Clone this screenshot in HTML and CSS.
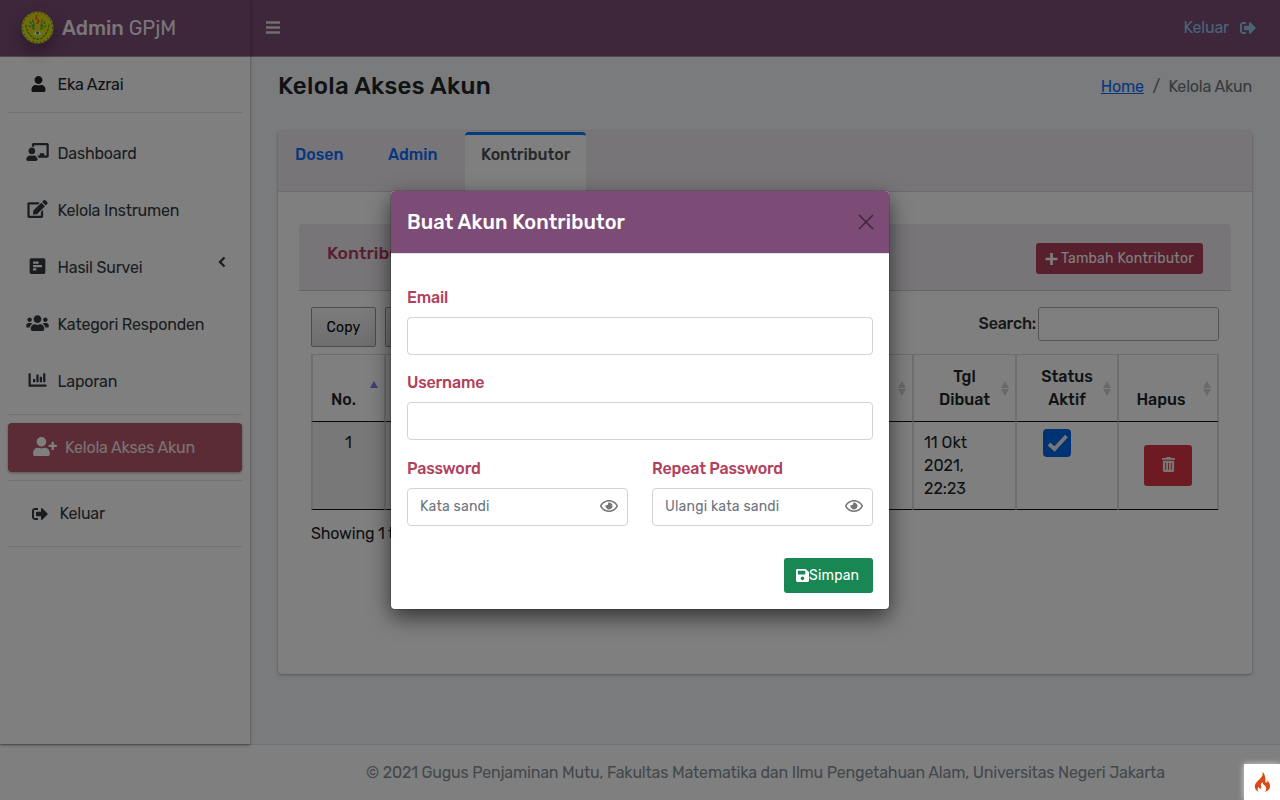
FILE: index.html
```html
<!DOCTYPE html>
<html lang="id">
<head>
<meta charset="utf-8">
<title>Kelola Akses Akun</title>
<link rel="stylesheet" href="styles.css">
</head>
<body>
<div class="app">
  <aside class="sidebar">
    <div class="brand">
      <svg class="logo" viewBox="0 0 34 34"><circle cx="17" cy="17" r="16.500" fill="#e6d80c"/><circle cx="17" cy="17" r="15.500" fill="none" stroke="#2c9a4c" stroke-width="1.200" stroke-dasharray="1.500 2.500"/><path d="M5 14q1 9 7 13M29 14q-1 9-7 13M9 11l5 7M25 11l-5 7M8 15l6 4M26 15l-6 4M12 9l2 8M22 9l-2 8M12 28q5 2 10 0" fill="none" stroke="#16a05a" stroke-width="1.100" stroke-dasharray="3 1"/><path d="M17 4q-3 3 0 5 3 2-1 4" fill="none" stroke="#e8442e" stroke-width="1.300"/><path d="M12.500 24.500l3-4h3l3 4z" fill="#fff"/><circle cx="17" cy="22.500" r="1.600" fill="#16a05a"/></svg>
      <span class="brand-name"><b>Admin</b> GPjM</span>
    </div>
    <nav class="menu">
      <a class="item user"><svg class="icon" width="14" height="16" viewBox="0 0 448 512"><path d="M224 256c70.700 0 128-57.300 128-128S294.700 0 224 0 96 57.300 96 128s57.300 128 128 128zm89.600 32h-16.700c-22.200 10.200-46.900 16-72.900 16s-50.600-5.800-72.900-16h-16.700C60.200 288 0 348.200 0 422.400V464c0 26.500 21.500 48 48 48h352c26.500 0 48-21.500 48-48v-41.600c0-74.200-60.200-134.400-134.400-134.400z"/></svg><span>Eka Azrai</span></a>
      <a class="item"><svg class="icon" width="23" height="18" viewBox="0 0 640 512"><path d="M208 352c-2.390 0-4.780.350-7.060 1.090C187.980 357.300 174.350 360 160 360c-14.350 0-27.980-2.700-40.950-6.910-2.280-.740-4.660-1.090-7.050-1.090C49.940 352-.330 402.480 0 464.620.140 490.880 21.730 512 48 512h224c26.270 0 47.860-21.120 48-47.380.330-62.140-49.940-112.620-112-112.620zm-48-32c53.020 0 96-42.980 96-96s-42.980-96-96-96-96 42.980-96 96 42.980 96 96 96zM592 0H208c-26.470 0-48 22.250-48 49.590V96c23.420 0 45.100 6.780 64 17.800V64h352v288h-64v-64H384v64h-76.240c19.100 16.690 33.120 38.730 39.690 64H592c26.470 0 48-22.250 48-49.590V49.590C640 22.250 618.470 0 592 0z"/></svg><span>Dashboard</span></a>
      <a class="item"><svg class="icon" width="21" height="18" viewBox="0 0 576 512"><path d="M402.600 83.200l90.200 90.200c3.800 3.800 3.800 10 0 13.800L274.400 405.600l-92.800 10.300c-12.400 1.400-22.900-9.100-21.500-21.500l10.300-92.800L388.800 83.200c3.800-3.800 10-3.800 13.800 0zm162-22.900l-48.800-48.800c-15.200-15.200-39.900-15.200-55.200 0l-35.400 35.400c-3.800 3.800-3.800 10 0 13.800l90.200 90.200c3.800 3.800 10 3.800 13.800 0l35.400-35.400c15.200-15.300 15.200-40 0-55.200zM384 346.200V448H64V128h229.800c3.200 0 6.200-1.300 8.500-3.500l40-40c7.600-7.600 2.200-20.500-8.500-20.500H48C21.500 64 0 85.500 0 112v352c0 26.500 21.500 48 48 48h352c26.500 0 48-21.500 48-48V306.200c0-10.700-12.900-16-20.500-8.500l-40 40c-2.200 2.300-3.500 5.300-3.500 8.500z"/></svg><span>Kelola Instrumen</span></a>
      <a class="item"><svg class="icon" width="16" height="18" viewBox="0 0 448 512"><path fill-rule="evenodd" d="M48 32h352a48 48 0 0 1 48 48v352a48 48 0 0 1-48 48H48a48 48 0 0 1-48-48V80a48 48 0 0 1 48-48zM112 128a16 16 0 0 0-16 16v32a16 16 0 0 0 16 16h128a16 16 0 0 0 16-16v-32a16 16 0 0 0-16-16zm0 96a16 16 0 0 0-16 16v32a16 16 0 0 0 16 16h224a16 16 0 0 0 16-16v-32a16 16 0 0 0-16-16zm0 96a16 16 0 0 0-16 16v32a16 16 0 0 0 16 16h64a16 16 0 0 0 16-16v-32a16 16 0 0 0-16-16z"/></svg><span>Hasil Survei</span><svg class="caret" width="8" height="12" viewBox="0 0 8 12"><path d="M6.500 1.500L2 6l4.500 4.500" fill="none" stroke="currentColor" stroke-width="2.300"/></svg></a>
      <a class="item"><svg class="icon" width="23" height="18" viewBox="0 0 640 512"><path d="M96 224c35.300 0 64-28.700 64-64s-28.700-64-64-64-64 28.700-64 64 28.700 64 64 64zm448 0c35.300 0 64-28.700 64-64s-28.700-64-64-64-64 28.700-64 64 28.700 64 64 64zm32 32h-64c-17.600 0-33.500 7.100-45.100 18.600 40.300 22.100 68.900 62 75.100 109.400h66c17.700 0 32-14.300 32-32v-32c0-35.300-28.700-64-64-64zm-256 0c61.900 0 112-50.100 112-112S381.900 32 320 32 208 82.100 208 144s50.100 112 112 112zm76.800 32h-8.300c-20.800 10-43.900 16-68.500 16s-47.600-6-68.500-16h-8.300C179.600 288 128 339.600 128 403.200V432c0 26.500 21.500 48 48 48h288c26.500 0 48-21.500 48-48v-28.800c0-63.600-51.600-115.200-115.200-115.200zm-223.700-13.400C161.500 263.100 145.600 256 128 256H64c-35.300 0-64 28.700-64 64v32c0 17.700 14.300 32 32 32h65.900c6.300-47.400 34.900-87.300 75.200-109.400z"/></svg><span>Kategori Responden</span></a>
      <a class="item"><svg class="icon" width="18" height="18" viewBox="0 0 512 512"><path d="M496 384H64V80c0-8.840-7.160-16-16-16H16C7.160 64 0 71.160 0 80v336c0 17.670 14.330 32 32 32h464c8.840 0 16-7.160 16-16v-32c0-8.840-7.160-16-16-16z"/><rect x="128" y="224" width="64" height="96" rx="13"/><rect x="224" y="96" width="64" height="224" rx="13"/><rect x="320" y="160" width="64" height="160" rx="13"/><rect x="416" y="64" width="64" height="256" rx="13"/></svg><span>Laporan</span></a>
      <a class="item active"><svg class="icon" width="24" height="19" viewBox="0 0 640 512"><path d="M624 208h-64v-64c0-8.800-7.200-16-16-16h-32c-8.800 0-16 7.200-16 16v64h-64c-8.800 0-16 7.200-16 16v32c0 8.800 7.200 16 16 16h64v64c0 8.800 7.200 16 16 16h32c8.800 0 16-7.200 16-16v-64h64c8.800 0 16-7.200 16-16v-32c0-8.800-7.200-16-16-16zM224 256c70.700 0 128-57.300 128-128S294.700 0 224 0 96 57.300 96 128s57.300 128 128 128zm89.600 32h-16.700c-22.200 10.200-46.900 16-72.900 16s-50.600-5.800-72.900-16h-16.700C60.200 288 0 348.200 0 422.400V464c0 26.500 21.500 48 48 48h352c26.500 0 48-21.500 48-48v-41.600c0-74.200-60.200-134.400-134.400-134.400z"/></svg><span>Kelola Akses Akun</span></a>
      <a class="item exit"><svg class="icon" width="16" height="16" viewBox="0 0 512 512"><path d="M497 273L329 441c-15 15-41 4.500-41-17v-96H152c-13.300 0-24-10.700-24-24v-96c0-13.300 10.700-24 24-24h136V88c0-21.400 25.900-32 41-17l168 168c9.300 9.400 9.300 24.600 0 34zM192 436v-40c0-6.600-5.400-12-12-12H96c-17.700 0-32-14.300-32-32V160c0-17.700 14.300-32 32-32h84c6.600 0 12-5.400 12-12V76c0-6.600-5.400-12-12-12H96c-53 0-96 43-96 96v192c0 53 43 96 96 96h84c6.600 0 12-5.400 12-12z"/></svg><span>Keluar</span></a>
    </nav>
  </aside>
  <header class="topbar">
    <svg width="14" height="16" viewBox="0 0 14 16" fill="#ddd"><path d="M0 1.200h14v2.600H0zM0 6.200h14v2.600H0zM0 11.200h14v2.600H0z"/></svg>
    <a class="logout"><span>Keluar</span><svg width="16" height="16" viewBox="0 0 512 512"><path d="M497 273L329 441c-15 15-41 4.500-41-17v-96H152c-13.300 0-24-10.700-24-24v-96c0-13.300 10.700-24 24-24h136V88c0-21.400 25.900-32 41-17l168 168c9.300 9.400 9.300 24.600 0 34zM192 436v-40c0-6.600-5.400-12-12-12H96c-17.700 0-32-14.300-32-32V160c0-17.700 14.300-32 32-32h84c6.600 0 12-5.400 12-12V76c0-6.600-5.400-12-12-12H96c-53 0-96 43-96 96v192c0 53 43 96 96 96h84c6.600 0 12-5.400 12-12z"/></svg></a>
  </header>
  <main class="content">
    <div class="page-head">
      <h1>Kelola Akses Akun</h1>
      <div class="crumbs"><a>Home</a><span class="slash">/</span><span>Kelola Akun</span></div>
    </div>
    <section class="card">
      <div class="tabs">
        <a class="tab">Dosen</a><a class="tab second">Admin</a><a class="tab current">Kontributor</a>
      </div>
      <div class="panel">
        <div class="panel-head">
          <h2>Kontributor</h2>
          <button class="add"><svg width="13" height="14" viewBox="0 0 13 14"><path d="M6.500 1v12M.5 7h12" stroke="#fff" stroke-width="2.600"/></svg><span>Tambah Kontributor</span></button>
        </div>
        <div class="tools">
          <div class="exports"><button class="export">Copy</button><button class="export"></button></div>
          <label class="search"><span>Search:</span><input type="text"></label>
        </div>
        <table class="grid">
          <colgroup><col class="c-no"><col class="c-info"><col class="c-date"><col class="c-status"><col class="c-del"></colgroup>
          <thead><tr>
            <th>No.<i class="sort asc"></i></th>
            <th><i class="sort"></i></th>
            <th>Tgl<br>Dibuat<i class="sort"></i></th>
            <th>Status<br>Aktif<i class="sort"></i></th>
            <th>Hapus<i class="sort"></i></th>
          </tr></thead>
          <tbody><tr>
            <td class="num">1</td><td></td>
            <td>11 Okt<br>2021,<br>22:23</td>
            <td class="state"><span class="check"><svg width="28" height="28" viewBox="0 0 28 28"><path d="M6 15l5.500 5L23.500 7" fill="none" stroke="#fff" stroke-width="3.800"/></svg></span></td>
            <td class="del"><button class="trash"><svg width="13" height="15" viewBox="0 0 448 512"><path fill="#fff" d="M32 464a48 48 0 0 0 48 48h288a48 48 0 0 0 48-48V128H32zm272-256a16 16 0 0 1 32 0v224a16 16 0 0 1-32 0zm-96 0a16 16 0 0 1 32 0v224a16 16 0 0 1-32 0zm-96 0a16 16 0 0 1 32 0v224a16 16 0 0 1-32 0zM432 32H312l-9.400-18.700A24 24 0 0 0 281.100 0H166.800a23.720 23.720 0 0 0-21.400 13.300L136 32H16A16 16 0 0 0 0 48v32a16 16 0 0 0 16 16h416a16 16 0 0 0 16-16V48a16 16 0 0 0-16-16z"/></svg></button></td>
          </tr></tbody>
        </table>
        <p class="info">Showing 1 to 1 of 1 entries</p>
      </div>
    </section>
  </main>
  <footer class="footer">© 2021 Gugus Penjaminan Mutu, Fakultas Matematika dan Ilmu Pengetahuan Alam, Universitas Negeri Jakarta</footer>
</div>
<div class="backdrop">
  <div class="modal">
    <div class="modal-head"><h3>Buat Akun Kontributor</h3><svg width="16" height="16" viewBox="0 0 16 16"><path d="M1 1l14 14M15 1L1 15" stroke="#3e263b" stroke-width="1.500"/></svg></div>
    <form class="modal-body">
      <div class="field"><label>Email</label><div class="input"></div></div>
      <div class="field"><label>Username</label><div class="input"></div></div>
      <div class="pair">
        <div class="field"><label>Password</label><div class="input"><span>Kata sandi</span><svg width="18" height="16" viewBox="0 0 576 512"><path d="M288 144a110.940 110.940 0 0 0-31.240 5 55.400 55.400 0 0 1 7.240 27 56 56 0 0 1-56 56 55.400 55.400 0 0 1-27-7.240A111.710 111.710 0 1 0 288 144zm284.520 97.400C518.290 135.590 410.930 64 288 64S57.680 135.640 3.480 241.410a32.350 32.350 0 0 0 0 29.190C57.710 376.410 165.070 448 288 448s230.320-71.640 284.520-177.410a32.350 32.350 0 0 0 0-29.190zM288 400c-98.650 0-189.090-55-237.930-144C98.910 167 189.340 112 288 112s189.090 55 237.930 144C477.100 345 386.660 400 288 400z"/></svg></div></div>
        <div class="field"><label>Repeat Password</label><div class="input"><span>Ulangi kata sandi</span><svg width="18" height="16" viewBox="0 0 576 512"><path d="M288 144a110.940 110.940 0 0 0-31.240 5 55.400 55.400 0 0 1 7.240 27 56 56 0 0 1-56 56 55.400 55.400 0 0 1-27-7.240A111.710 111.710 0 1 0 288 144zm284.520 97.400C518.290 135.590 410.930 64 288 64S57.680 135.640 3.480 241.410a32.350 32.350 0 0 0 0 29.190C57.710 376.410 165.070 448 288 448s230.320-71.640 284.520-177.410a32.350 32.350 0 0 0 0-29.190zM288 400c-98.650 0-189.090-55-237.930-144C98.910 167 189.340 112 288 112s189.090 55 237.930 144C477.100 345 386.660 400 288 400z"/></svg></div></div>
      </div>
      <button type="button" class="save"><svg width="13" height="15" viewBox="0 0 448 512"><path fill="#fff" d="M433.941 129.941l-83.882-83.882A48 48 0 0 0 316.118 32H48C21.490 32 0 53.490 0 80v352c0 26.510 21.490 48 48 48h352c26.510 0 48-21.490 48-48V163.882a48 48 0 0 0-14.059-33.941zM224 416c-35.346 0-64-28.654-64-64 0-35.346 28.654-64 64-64s64 28.654 64 64c0 35.346-28.654 64-64 64zm96-304.520V212c0 6.627-5.373 12-12 12H76c-6.627 0-12-5.373-12-12V108c0-6.627 5.373-12 12-12h228.520c3.183 0 6.235 1.264 8.485 3.515l3.480 3.480A11.996 11.996 0 0 1 320 111.480z"/></svg><span>Simpan</span></button>
    </form>
  </div>
</div>
<div class="debug"><svg width="17" height="20" viewBox="0 0 17 20"><path fill="#dd4814" d="M8.500 0c.8 3-.5 4.500-2.300 6.500C4 9 .8 11 .8 14.500c0 2.600 1.600 4.500 4 5.200-1.500-1.500-1.600-3.600 0-5 .2 1.500.9 2 1.700 2 1.400-.2.400-2.400.3-3.500C6.800 11.500 8 11 8.800 10.300c-.3 2.700 3.400 3 3.400 6.200 0 1.500-.7 2.600-1.600 3.300 3-.6 5.400-2.600 5.400-5.600 0-2.500-1.200-4.500-2.500-6 .2 1.500-.3 2.300-1 2.300-1.800 0-.8-2.300-1.200-4.500C10.900 3.500 10.300 1.200 8.500 0z"/></svg></div>
</body>
</html>
```
FILE: styles.css
```css
* { box-sizing: border-box; }
body { margin: 0; font: 16px/1.5 Rubik, Roboto, sans-serif; letter-spacing: -.19px; color: #212529; height: 800px; overflow: hidden; }
h1, h2, h3, p { margin: 0; font-weight: 500; }
svg { flex: none; display: block; }
button { font: inherit; }
.app { display: grid; grid-template: 57px 687px 56px / 250px 1fr; height: 800px; background: #f4f6f9; }
.sidebar { grid-row: 1 / 3; background: #fff; box-shadow: 0 1px 3px rgba(0,0,0,.45); z-index: 1; }
.brand { height: 57px; background: #7c4c76; display: flex; align-items: center; padding: 0 0 2px 21px; gap: 7px; color: #fff; font-size: 20px; letter-spacing: 0; border-bottom: 1px solid #a08aa0; }
.logo { width: 33px; height: 33px; border-radius: 50%; box-shadow: 0 8px 16px rgba(0,0,0,.3); }
.brand-name { margin-left: 1px; opacity: .9; white-space: nowrap; padding-top: 2px; }
.brand-name b { font-weight: 500; }
.menu { padding: 0 8px; }
.item { display: flex; align-items: center; height: 57px; color: #343a40; white-space: nowrap; }
.icon { margin: 0 0 3px; fill: currentColor; }
.item > .icon { width: 23px; margin-left: 18px; margin-right: 8.500px; }
.user { height: 56px; border-bottom: 1px solid #dee2e6; margin-bottom: 12px; color: #212529; }
.user > .icon { margin-left: 19px; margin-right: 7.500px; margin-bottom: 1px; }
.caret { margin: -11px 16px 0 auto; }
.item.active { position: relative; height: 49px; background: #b6586a; color: #fff; border-radius: 4px; margin: 13px 0 8px; box-shadow: 0 1px 3px rgba(0,0,0,.35); }
.active > .icon { width: 24px; margin-left: 25px; margin-right: 8px; }
.active > span { opacity: .85; }
.active::before { content: ""; position: absolute; left: 0; right: 0; top: -9px; border-top: 1px solid #dee2e6; }
.exit { height: 67px; border: solid #dee2e6; border-width: 1px 0; }
.exit > .icon { width: 16px; margin-left: 24px; margin-right: 11.500px; margin-bottom: 0; }
.topbar { background: #7c4c76; border-bottom: 1px solid #a08aa0; display: flex; justify-content: space-between; align-items: center; padding: 0 24px 1px 16px; }
.logout { display: flex; gap: 11px; align-items: center; color: #92cbe8; fill: currentColor; }
.content { padding: 14px 28px 0; }
.page-head { display: flex; justify-content: space-between; height: 60px; align-items: flex-start; }
h1 { font-size: 24px; line-height: 30px; letter-spacing: .33px; }
.crumbs { display: flex; line-height: 30px; padding-top: 1px; color: #6c757d; }
.crumbs a { color: #0d6efd; text-decoration: underline; }
.slash { margin: 0 8.500px; }
.card { height: 543px; background: #fff; border-radius: 4px; box-shadow: 0 0 1px rgba(0,0,0,.12), 0 1px 3px rgba(0,0,0,.3); }
.tabs { height: 61px; background: #f1ebf2; border-bottom: 1px solid #dcd6e0; border-radius: 4px 4px 0 0; display: flex; padding-top: 1px; font-weight: 500; letter-spacing: 0; color: #0d6efd; }
.tab { padding: 11px 17px; width: 93px; height: 59px; }
.current { margin-left: 1px; width: 121px; background: #fff; color: #495057; border-top: 3px solid #007bff; padding: 8px 0 0 16px; border-radius: 4px 4px 0 0; height: 60px; }
.panel { padding: 32px 21px 0; }
.panel-head { height: 67px; background: #f1ebf2; border-bottom: 1px solid #cfcbd1; border-radius: 4px 4px 0 0; display: flex; justify-content: space-between; align-items: flex-start; padding: 19px 28px; }
h2 { font-size: 17.600px; line-height: 21px; letter-spacing: 0; color: #b0405b; }
.add { background: #b03e5a; color: #fff; border: 0; border-radius: 3px; width: 167px; height: 31px; padding: 0 9px; display: flex; gap: 3px; align-items: center; font-size: 14px; letter-spacing: .2px; white-space: nowrap; }
.tools { display: flex; justify-content: space-between; padding: 16px 12px 7px; height: 63px; align-items: flex-start; }
.exports { display: flex; gap: 9px; }
.export { width: 65px; height: 40px; border: 1px solid #999; border-radius: 2px; background: linear-gradient(#f8f8f8, #dcdcdc); font-size: 14px; letter-spacing: .2px; padding: 0; color: #000; }
.search { display: flex; align-items: center; gap: 2px; font-weight: 500; color: #333; }
.search input { width: 181px; height: 34px; border: 1px solid #aaa; border-radius: 3px; background: transparent; }
.grid { width: 908px; margin-left: 12px; table-layout: fixed; border-spacing: 0; line-height: 23px; letter-spacing: 0; }
.c-no { width: 74px; } .c-info { width: 528px; } .c-date { width: 103px; } .c-status { width: 102px; } .c-del { width: 101px; }
.grid th, .grid td { border: 0 solid #ddd; border-width: 0 1px; }
.grid th { position: relative; height: 68px; padding: 10px; vertical-align: bottom; border-top-width: 1px; border-bottom: 1px solid #111; font-weight: 500; color: #212529; }
.grid td { height: 88px; padding: 9px 10px; vertical-align: top; border-bottom: 1px solid #111; }
.grid th:first-child { padding-right: 20px; }
.grid th:last-child { padding-right: 24px; }
.grid tr > :first-child { border-left-width: 2px; }
.grid tr > :last-child { border-right-width: 2px; }
.grid td.num { text-align: center; background: #f0f0f0; }
.sort::before, .sort::after { content: ""; position: absolute; right: 6px; border: solid transparent; border-width: 0 4px; }
.sort::before { top: 26px; border-bottom: 7px solid #d2d2d2; }
.sort::after { top: 34px; border-top: 7px solid #d2d2d2; }
.sort.asc::before { border-bottom-color: #7f7fe0; }
.sort.asc::after { display: none; }
.grid td.state { padding: 7px 0 0 26px; }
.check { display: block; width: 28px; height: 28px; border-radius: 4px; background: #0066e6; }
.check path { stroke: #eee; }
.grid td.del { padding: 23px 0 0 25px; }
.trash { display: flex; width: 48px; height: 41px; align-items: center; justify-content: center; background: #dc3545; border: 0; border-radius: 3px; padding-bottom: 3px; }
.trash path { fill: #eee; }
.info { margin: 12px; font-weight: 400; }
.footer { grid-column: 1 / 3; background: #fff; border-top: 1px solid #dee2e6; padding: 16px 0 0 366px; color: #869099; white-space: nowrap; }
.backdrop { position: absolute; inset: 0; z-index: 5; background: rgba(0,0,0,.5); padding-top: 191px; }
.modal { width: 498px; height: 418px; margin-left: 391px; background: #fff; border-radius: 4px; overflow: hidden; box-shadow: 0 0 0 1px rgba(0,0,0,.12), 0 8px 22px rgba(0,0,0,.6); }
.modal-head { height: 63px; background: #7c4c76; border-bottom: 1px solid #dee2e6; display: flex; justify-content: space-between; align-items: center; padding: 0 15px 0 16px; color: #fff; }
h3 { font-size: 20px; font-weight: 500; letter-spacing: .08px; }
.modal-body { padding: 32px 16px 0; display: flex; flex-direction: column; }
.field { margin-bottom: 16px; flex: 1; }
.field label { display: block; height: 31px; color: #b0405b; font-weight: 500; white-space: nowrap; letter-spacing: -.17px; }
.input { height: 38px; border: 1px solid #ced4da; border-radius: 4px; display: flex; align-items: center; justify-content: space-between; padding: 0 9px 2px 12px; font-size: 14px; letter-spacing: .2px; color: #6c757d; white-space: nowrap; fill: #77757a; }
.pair { display: flex; gap: 24px; margin-top: 1px; }
.save { align-self: flex-end; margin-top: 16px; width: 89px; height: 35px; background: #198754; color: #fff; border: 0; border-radius: 3px; display: flex; align-items: center; padding: 0 12px; font-size: 14px; letter-spacing: .2px; }
.debug { position: absolute; z-index: 6; right: 0; bottom: 0; width: 36px; height: 36px; background: #fff; box-shadow: 0 0 6px rgba(255,255,255,.7); display: flex; align-items: center; justify-content: center; }
```
